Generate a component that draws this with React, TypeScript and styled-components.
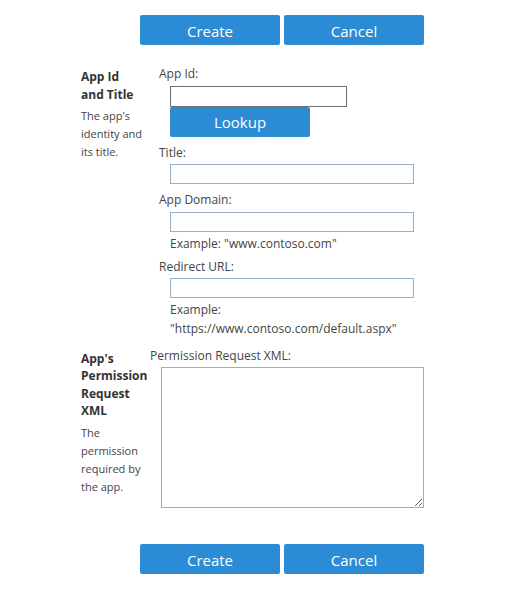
import React from "react";
import styled, { createGlobalStyle } from "styled-components";

const GlobalStyle = createGlobalStyle`
  body {
    margin: 0;
    background: #fff;
    font-family: "Open Sans", "Noto Sans", sans-serif;
    color: #444;
  }
`;

function ActionBar() {
  return (
    <ButtonBar>
      <Button type="button">Create</Button>
      <Button type="button">Cancel</Button>
    </ButtonBar>
  );
}

export default function App() {
  return (
    <>
      <GlobalStyle />
      <Page>
        <ActionBar />

        <Section $side={78} $top={20}>
          <Side>
            <Heading>
              App Id
              <br />
              and Title
            </Heading>
            <Desc>
              The app's
              <br />
              identity and
              <br />
              its title.
            </Desc>
          </Side>
          <Fields>
            <Field>
              <Label>App Id:</Label>
              <TextInput type="text" $width={177} $height={21} $dark />
              <LookupButton type="button">Lookup</LookupButton>
            </Field>
            <Field $top={7}>
              <Label>Title:</Label>
              <TextInput type="text" />
            </Field>
            <Field $top={7}>
              <Label>App Domain:</Label>
              <TextInput type="text" />
              <Hint $top={2}>Example: "www.contoso.com"</Hint>
            </Field>
            <Field $top={7}>
              <Label>Redirect URL:</Label>
              <TextInput type="text" />
              <Hint $top={1.5}>
                Example:
                <br />
                "https://www.contoso.com/default.aspx"
              </Hint>
            </Field>
          </Fields>
        </Section>

        <Section $side={69} $top={11}>
          <Side>
            <Heading>
              App's
              <br />
              Permission
              <br />
              Request
              <br />
              XML
            </Heading>
            <Desc>
              The
              <br />
              permission
              <br />
              required by
              <br />
              the app.
            </Desc>
          </Side>
          <Fields>
            <Field>
              <Label>Permission Request XML:</Label>
              <XmlArea />
            </Field>
          </Fields>
        </Section>

        <Footer>
          <ActionBar />
        </Footer>
      </Page>
    </>
  );
}

const Page = styled.div`
  padding: 15px 0 40px;
`;

const ButtonBar = styled.div`
  display: flex;
  gap: 4px;
  padding-left: 140px;
`;

const Button = styled.button`
  width: 140px;
  height: 30px;
  padding: 1px 0 0;
  border: none;
  border-radius: 2px;
  background: #2b8bd4;
  color: #fff;
  font-family: "Open Sans", "Noto Sans", sans-serif;
  font-size: 15px;
  cursor: pointer;
`;

const LookupButton = styled(Button)`
  display: block;
  margin-left: 11px;
`;

const Section = styled.div<{ $side: number; $top: number }>`
  display: grid;
  grid-template-columns: ${(p) => p.$side}px 1fr;
  padding-left: 81px;
  margin-top: ${(p) => p.$top}px;
`;

const Side = styled.div`
  padding-top: 3px;
`;

const Heading = styled.div`
  font-size: 12px;
  font-weight: bold;
  line-height: 17.5px;
  color: #333;
`;

const Desc = styled.div`
  margin-top: 4px;
  font-size: 11px;
  line-height: 18px;
  color: #444;
`;

const Fields = styled.div`
  display: flex;
  flex-direction: column;
`;

const Field = styled.div<{ $top?: number }>`
  margin-top: ${(p) => p.$top ?? 0}px;
`;

const Label = styled.div`
  font-size: 12px;
  line-height: 18px;
  margin-bottom: 2.6px;
  color: #444;
`;

const TextInput = styled.input<{ $width?: number; $height?: number; $dark?: boolean }>`
  display: block;
  box-sizing: border-box;
  width: ${(p) => p.$width ?? 244}px;
  height: ${(p) => p.$height ?? 20}px;
  margin: 0 0 0 11px;
  padding: 1px 4px;
  border: 1px solid ${(p) => (p.$dark ? "#6f6f6f" : "#98afc6")};
  border-radius: 0;
  background: #fff;
  font-family: "Open Sans", "Noto Sans", sans-serif;
  font-size: 12px;
  outline: none;
`;

const Hint = styled.div<{ $top: number }>`
  margin: ${(p) => p.$top}px 0 -2px 11px;
  font-size: 12px;
  line-height: 19px;
  color: #444;
`;

const XmlArea = styled.textarea`
  display: block;
  box-sizing: border-box;
  width: 263px;
  height: 141px;
  margin: 0 0 0 11px;
  padding: 2px 4px;
  border: 1px solid #98afc6;
  border-radius: 0;
  font-family: "Open Sans", "Noto Sans", sans-serif;
  font-size: 12px;
  outline: none;
`;

const Footer = styled.div`
  margin-top: 36px;
`;
